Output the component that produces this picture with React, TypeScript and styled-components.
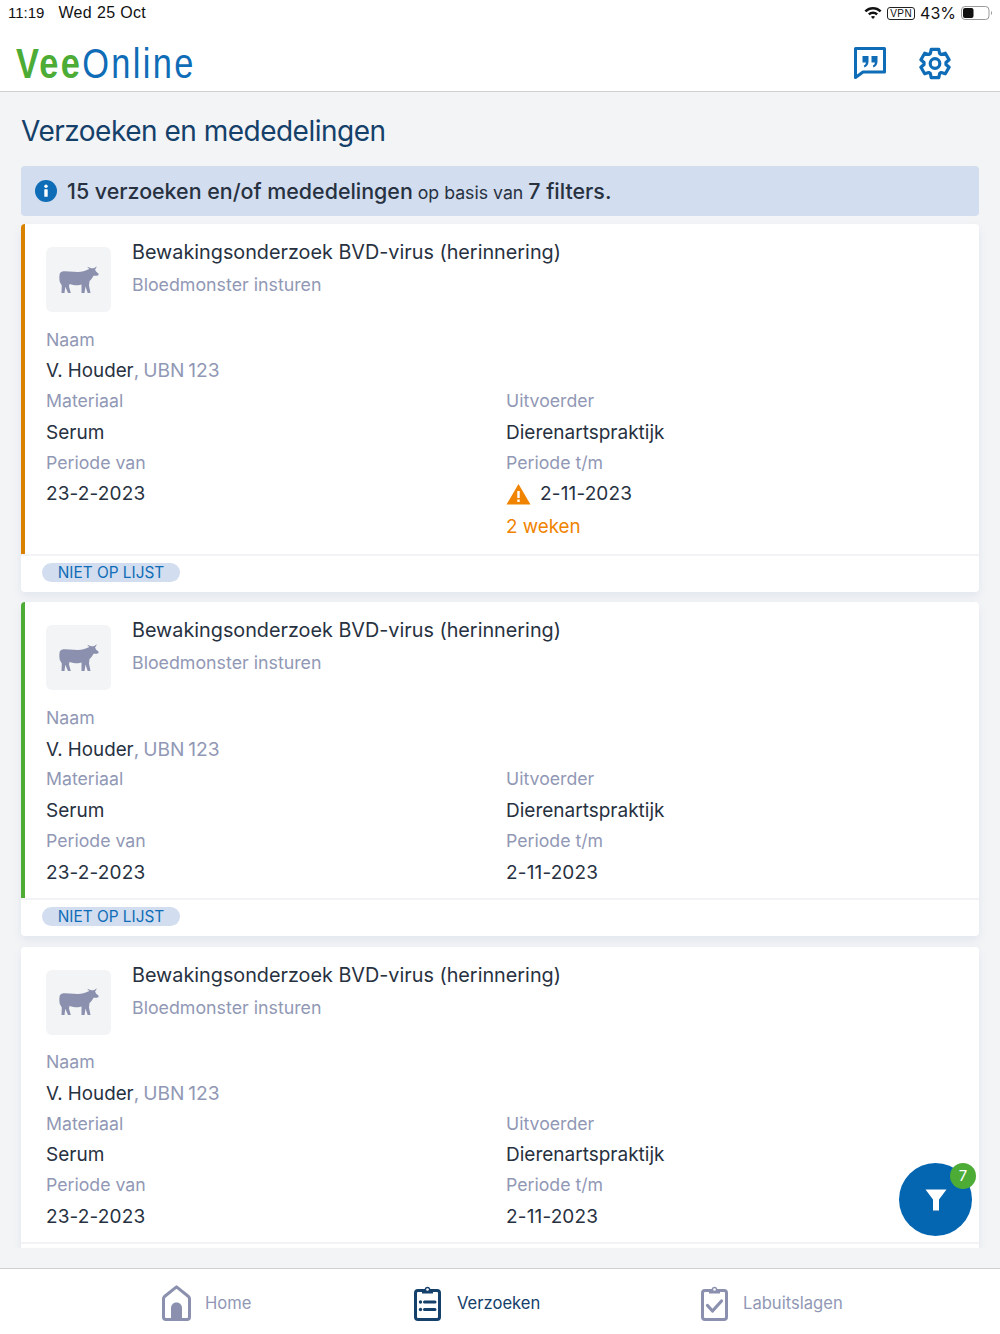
import React from 'react';
import styled, { createGlobalStyle } from 'styled-components';

const GlobalStyle = createGlobalStyle`
  html, body {
    margin: 0;
    padding: 0;
    background: #fff;
  }
  * {
    box-sizing: border-box;
  }
  body {
    font-family: Inter, "Liberation Sans", sans-serif;
    color: #27313f;
  }
`;

const Page = styled.div`
  position: relative;
  width: 1000px;
  height: 1334px;
  display: flex;
  flex-direction: column;
  overflow: hidden;
  background: #f3f4f6;
`;

const Top = styled.header`
  height: 92px;
  flex-shrink: 0;
  background: #fff;
  border-bottom: 1px solid #cfd0d2;
`;

const StatusBar = styled.div`
  height: 26px;
  padding: 0 7px 0 8px;
  display: flex;
  align-items: center;
  justify-content: space-between;
  font-family: "Liberation Sans", sans-serif;
  font-size: 15px;
  color: #111;
`;

const StatusLeft = styled.div`
  display: flex;
  align-items: baseline;
  gap: 14px;
`;

const StatusDate = styled.span`
  font-size: 16px;
  letter-spacing: 0.35px;
`;

const StatusRight = styled.div`
  display: flex;
  align-items: center;
  gap: 5px;
  font-family: Inter, sans-serif;
  font-size: 16px;
`;

const VpnTag = styled.span`
  border: 1px solid #222;
  border-radius: 3px;
  font-family: "Liberation Sans", sans-serif;
  font-size: 10px;
  line-height: 11px;
  padding: 0 2px;
  letter-spacing: 0.4px;
`;

const Brand = styled.div`
  height: 65px;
  padding: 9px 49px 0 16px;
  display: flex;
  align-items: center;
  justify-content: space-between;
`;

const Logo = styled.div`
  font-family: "Liberation Sans", sans-serif;
  font-size: 43px;
  line-height: 1;
  letter-spacing: 2.9px;
  color: #0f6cb6;
  transform: scaleX(0.8);
  transform-origin: left center;
`;

const LogoGreen = styled.span`
  font-weight: 700;
  color: #4cac35;
`;

const TopActions = styled.div`
  display: flex;
  align-items: center;
  gap: 33px;
`;

const Main = styled.main`
  height: 1156px;
  flex-shrink: 0;
  padding: 0 21px;
  overflow: hidden;
`;

const Title = styled.h1`
  margin: 0;
  height: 74px;
  padding-top: 21px;
  font-size: 28px;
  line-height: 36px;
  font-weight: 400;
  letter-spacing: -0.5px;
  color: #14406a;
`;

const InfoBar = styled.div`
  height: 50px;
  margin-bottom: 8px;
  padding: 0 14px;
  display: flex;
  align-items: center;
  gap: 10px;
  border-radius: 4px;
  background: #d2ddf0;
  font-size: 17.7px;
  white-space: pre;
`;

const InfoStrong = styled.strong`
  font-size: 21.4px;
  font-weight: 500;
`;

const Card = styled.article`
  margin-bottom: 10.75px;
  background: #fff;
  border-radius: 4px;
  box-shadow: 0 4px 8px rgba(120, 150, 190, 0.14);
`;

const CardBody = styled.div<{ $accent?: string }>`
  padding: 23px 21px 10.5px 21px;
  border-left: 4px solid ${props => props.$accent || 'transparent'};
  border-radius: 4px 0 0 0;
`;

const CardHead = styled.div`
  display: flex;
  gap: 21px;
  margin-bottom: 12.5px;
`;

const Thumb = styled.div`
  width: 65px;
  height: 65px;
  flex-shrink: 0;
  display: flex;
  align-items: center;
  justify-content: center;
  border-radius: 6px;
  background: #f3f4f6;
`;

const CardTitle = styled.div`
  font-size: 19.8px;
  line-height: 30px;
  margin-top: -10px;
  color: #27313f;
`;

const CardSub = styled.div`
  font-size: 17.8px;
  line-height: 35px;
  color: #9198b5;
`;

const Fields = styled.div`
  display: grid;
  grid-template-columns: 460px 1fr;
`;

const Label = styled.div`
  height: 30.75px;
  padding-bottom: 1px;
  font-size: 17.7px;
  line-height: 29.75px;
  color: #9198b5;
`;

const Value = styled.div`
  height: 30.75px;
  padding-top: 1px;
  font-size: 19px;
  line-height: 29.75px;
  color: #27313f;
  display: flex;
  align-items: center;
  gap: 9px;
`;

const DateText = styled.span`
  letter-spacing: 0.15px;
`;

const NameText = styled.span`
  font-size: 18.8px;
`;

const Muted = styled.span`
  font-size: 19.2px;
  word-spacing: -1.5px;
  color: #9198b5;
`;

const FullRow = styled.div`
  grid-column: 1 / 3;
`;

const Warn = styled.div`
  margin-top: 2px;
  font-size: 18.8px;
  line-height: 32px;
  color: #f08300;
`;

const CardFoot = styled.div`
  height: 38px;
  padding: 7px 21px;
  border-top: 2px solid #f1f3f7;
`;

const Badge = styled.span`
  display: block;
  width: 138px;
  height: 19px;
  border-radius: 10px;
  background: #d2ddf0;
  color: #0f6cb6;
  font-size: 15.4px;
  line-height: 19px;
  text-align: center;
`;

const Fab = styled.button`
  position: absolute;
  left: 899px;
  top: 1163px;
  width: 73px;
  height: 73px;
  padding: 0;
  border: none;
  border-radius: 50%;
  background: #0465b0;
  display: flex;
  align-items: center;
  justify-content: center;
`;

const FabCount = styled.span`
  position: absolute;
  right: -4px;
  top: 0;
  width: 26px;
  height: 26px;
  border-radius: 50%;
  background: #4cac35;
  color: #fff;
  font-family: Inter, sans-serif;
  font-size: 15px;
  line-height: 26px;
  text-align: center;
`;

const Spacer = styled.div`
  height: 20px;
  flex-shrink: 0;
`;

const Nav = styled.nav`
  flex: 1;
  background: #fff;
  border-top: 1px solid #cfd0d2;
  display: grid;
  grid-template-columns: 252px 287px 1fr;
  padding-left: 162px;
  align-items: start;
`;

const NavItem = styled.div<{ $active?: boolean; $gap: number }>`
  display: flex;
  align-items: center;
  height: 68px;
  gap: ${props => props.$gap}px;
  font-size: 16.6px;
  color: ${props => (props.$active ? '#14406a' : '#9198b5')};
`;

const InfoIcon = () => (
  <svg width="22" height="22" viewBox="0 0 22 22">
    <circle cx="11" cy="11" r="11" fill="#0f6cb6" />
    <circle cx="11" cy="6.3" r="1.7" fill="#fff" />
    <rect x="9.3" y="9.2" width="3.4" height="7.6" rx="0.6" fill="#fff" />
  </svg>
);

const QuoteIcon = () => (
  <svg width="32" height="33" viewBox="0 0 32 33">
    <path d="M1.500 1.500 H30.500 V25 H9 L1.500 30.500 Z" fill="none" stroke="#0f6cb6" strokeWidth="3" strokeLinejoin="round" />
    <path d="M8.500 9 H14.500 V14.500 C14.500 17.500 13 19.500 10.500 20.500 L9.800 18.500 C11 18 11.800 17 11.900 15.500 H8.500 Z" fill="#0f6cb6" />
    <path d="M17.500 9 H23.500 V14.500 C23.500 17.500 22 19.500 19.500 20.500 L18.800 18.500 C20 18 20.800 17 20.900 15.500 H17.500 Z" fill="#0f6cb6" />
  </svg>
);

// outline of a six toothed cog, drawn around the centre of a 32px box
const gearOutline = () => {
  const point = (angle: number, radius: number) => {
    const rad = (angle * Math.PI) / 180;
    return `${(16 + radius * Math.cos(rad)).toFixed(2)} ${(16 + radius * Math.sin(rad)).toFixed(2)}`;
  };
  const parts: string[] = [];
  for (let i = 0; i < 6; i++) {
    const mid = -90 + i * 60;
    parts.push(point(mid - 15, 14.6), point(mid + 15, 14.6), point(mid + 25, 11), point(mid + 35, 11));
  }
  return `M${parts.join(' L')} Z`;
};

const GearIcon = () => (
  <svg width="32" height="33" viewBox="0 0 32 32" fill="none" stroke="#0f6cb6" strokeWidth="3.200" strokeLinejoin="round">
    <path d={gearOutline()} />
    <circle cx="16" cy="16" r="4.800" />
  </svg>
);

const WifiIcon = () => (
  <svg width="18" height="14" viewBox="0 0 18 14">
    <path d="M9 1 C5.800 1 3 2.200 .5 4.400 L2.200 6.200 C4.100 4.500 6.400 3.400 9 3.400 C11.600 3.400 13.900 4.500 15.800 6.200 L17.500 4.400 C15 2.200 12.200 1 9 1 Z" fill="#111" />
    <path d="M9 5.500 C7.200 5.500 5.500 6.200 4 7.500 L5.700 9.200 C6.700 8.400 7.800 7.900 9 7.900 C10.200 7.900 11.300 8.400 12.300 9.200 L14 7.500 C12.500 6.200 10.800 5.500 9 5.500 Z" fill="#111" />
    <path d="M9 10 C8.200 10 7.500 10.300 6.900 10.800 L9 13 L11.100 10.800 C10.500 10.300 9.800 10 9 10 Z" fill="#111" />
  </svg>
);

const BatteryIcon = () => (
  <svg width="32" height="16" viewBox="0 0 32 16">
    <rect x=".5" y="1.500" width="27.500" height="13" rx="3.500" fill="none" stroke="#999" />
    <rect x="2" y="3" width="10.500" height="10" rx="2" fill="#111" />
    <path d="M30 6 C31.300 6.400 31.300 9.600 30 10 Z" fill="#999" />
  </svg>
);

const CowIcon = () => (
  <svg width="40" height="28" viewBox="0 0 40 28">
    <path
      fill="#8b90ae"
      d="M.8 7.500 C1.500 5.800 3.500 5.300 6 5.300 L19 6 C23 6 26 5 29 3.500 L30.500 3 C29.500 2.500 28.700 1.700 28.300 .8 C29.500 1.300 31 2 32.300 2.200 L34.500 2.200 C35.700 1.800 36.800 1.200 37.500 .3 C37.500 1.500 37 2.600 36 3.300 L37 5.500 L39.600 7.800 C39.800 9 39 9.800 37.800 9.800 L34.500 9.800 C33.500 12 32 14 30.500 15 L30 19.500 L31.500 27 L28.700 27 L26.500 20.500 L25.500 27 L22.500 27 L22.500 18.500 C20 19.800 15 19.500 10.500 18 L10 20.500 L11.800 27 L9 27 L6.300 20.800 L5.500 27 L2.500 27 L2.800 19.500 L.8 16 C.2 13 .2 10 .8 7.500 Z"
    />
  </svg>
);

const WarningIcon = () => (
  <svg width="25" height="22" viewBox="0 0 25 22">
    <path d="M12.500 1 L24.500 21.500 H.5 Z" fill="#f08300" />
    <rect x="11.300" y="8" width="2.400" height="7" fill="#fff" />
    <rect x="11.300" y="16.500" width="2.400" height="2.400" fill="#fff" />
  </svg>
);

const FilterIcon = () => (
  <svg width="22" height="22" viewBox="0 0 22 22">
    <path d="M.5 .5 H21.500 L14 10.500 V21.500 H8 V10.500 Z" fill="#fff" />
  </svg>
);

const HomeIcon = () => (
  <svg width="29" height="36" viewBox="0 0 29 36" fill="none">
    <path d="M1.500 32 V14 Q1.500 12.500 2.500 11.500 L14.500 1.800 L26.500 11.500 Q27.500 12.500 27.500 14 V32 Q27.500 34.500 25 34.500 H4 Q1.500 34.500 1.500 32 Z" stroke="#8b90ae" strokeWidth="3" strokeLinejoin="round" />
    <path d="M9 35 V23 C9 15.500 20 15.500 20 23 V35 Z" fill="#8b90ae" />
  </svg>
);

const RequestsIcon = () => (
  <svg width="27" height="36" viewBox="0 0 27 36" fill="none">
    <rect x="1.500" y="5.500" width="24" height="29" rx="2.500" stroke="#14406a" strokeWidth="3" />
    <path d="M8 8.500 V5 H10.500 C10.500 .5 16.500 .5 16.500 5 H19 V8.500 Z" fill="#14406a" />
    <circle cx="13.500" cy="4.500" r="1.300" fill="#fff" />
    <path d="M10.500 17 H21 M10.500 24.500 H21" stroke="#14406a" strokeWidth="3" strokeLinecap="round" />
    <circle cx="6.500" cy="17" r="1.700" fill="#14406a" />
    <circle cx="6.500" cy="24.500" r="1.700" fill="#14406a" />
  </svg>
);

const LabIcon = () => (
  <svg width="27" height="36" viewBox="0 0 27 36" fill="none">
    <rect x="1.500" y="5.500" width="24" height="29" rx="2.500" stroke="#8b90ae" strokeWidth="3" />
    <path d="M8 8.500 V5 H10.500 C10.500 .5 16.500 .5 16.500 5 H19 V8.500 Z" fill="#8b90ae" />
    <circle cx="13.500" cy="4.500" r="1.300" fill="#fff" />
    <path d="M6.500 20.500 L11.500 26 L20.500 16" stroke="#8b90ae" strokeWidth="3.200" strokeLinecap="round" strokeLinejoin="round" />
  </svg>
);

interface RequestCardProps {
  accent?: string;
  warning?: boolean;
  badge?: boolean;
}

const RequestCard: React.FC<RequestCardProps> = ({ accent, warning, badge = true }) => (
  <Card>
    <CardBody $accent={accent}>
      <CardHead>
        <Thumb>
          <CowIcon />
        </Thumb>
        <div>
          <CardTitle>Bewakingsonderzoek BVD-virus (herinnering)</CardTitle>
          <CardSub>Bloedmonster insturen</CardSub>
        </div>
      </CardHead>
      <Fields>
        <FullRow>
          <Label>Naam</Label>
          <Value>
            <NameText>
              V. Houder<Muted>, UBN 123</Muted>
            </NameText>
          </Value>
        </FullRow>
        <div>
          <Label>Materiaal</Label>
          <Value>Serum</Value>
        </div>
        <div>
          <Label>Uitvoerder</Label>
          <Value>Dierenartspraktijk</Value>
        </div>
        <div>
          <Label>Periode van</Label>
          <Value>
            <DateText>23-2-2023</DateText>
          </Value>
        </div>
        <div>
          <Label>Periode t/m</Label>
          <Value>
            {warning && <WarningIcon />}
            <DateText>2-11-2023</DateText>
          </Value>
          {warning && <Warn>2 weken</Warn>}
        </div>
      </Fields>
    </CardBody>
    <CardFoot>{badge && <Badge>NIET OP LIJST</Badge>}</CardFoot>
  </Card>
);

export default function App() {
  return (
    <Page>
      <GlobalStyle />
      <Top>
        <StatusBar>
          <StatusLeft>
            <span>11:19</span>
            <StatusDate>Wed 25 Oct</StatusDate>
          </StatusLeft>
          <StatusRight>
            <WifiIcon />
            <VpnTag>VPN</VpnTag>
            <span>43%</span>
            <BatteryIcon />
          </StatusRight>
        </StatusBar>
        <Brand>
          <Logo>
            <LogoGreen>Vee</LogoGreen>Online
          </Logo>
          <TopActions>
            <QuoteIcon />
            <GearIcon />
          </TopActions>
        </Brand>
      </Top>
      <Main>
        <Title>Verzoeken en mededelingen</Title>
        <InfoBar>
          <InfoIcon />
          <span>
            <InfoStrong>15 verzoeken en/of mededelingen</InfoStrong> op basis van{' '}
            <InfoStrong>7 filters.</InfoStrong>
          </span>
        </InfoBar>
        <RequestCard accent="#d98200" warning />
        <RequestCard accent="#4cac35" />
        <RequestCard badge={false} />
      </Main>
      <Spacer />
      <Nav>
        <NavItem $gap={14}>
          <HomeIcon />
          Home
        </NavItem>
        <NavItem $active $gap={16}>
          <RequestsIcon />
          Verzoeken
        </NavItem>
        <NavItem $gap={15}>
          <LabIcon />
          Labuitslagen
        </NavItem>
      </Nav>
      <Fab>
        <FilterIcon />
        <FabCount>7</FabCount>
      </Fab>
    </Page>
  );
}
